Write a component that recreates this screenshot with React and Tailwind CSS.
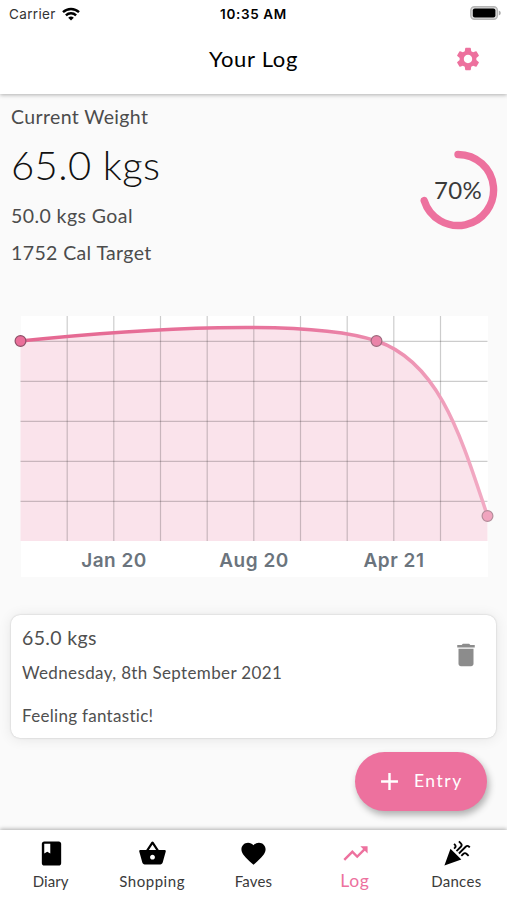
import React from 'react';
import {
  MdAdd,
  MdBook,
  MdCelebration,
  MdDelete,
  MdFavorite,
  MdSettings,
  MdShoppingBasket,
  MdTrendingUp,
} from 'react-icons/md';

const tabs = [
  { label: 'Diary', icon: MdBook, text: 'tracking-[0.1px]' },
  { label: 'Shopping', icon: MdShoppingBasket, text: 'tracking-[0.55px]' },
  { label: 'Faves', icon: MdFavorite, text: 'tracking-[0.2px]' },
  { label: 'Log', icon: MdTrendingUp, active: true },
  { label: 'Dances', icon: MdCelebration, text: 'tracking-[0.3px]' },
];

const columns = [46.7, 93.3, 140, 186.7, 233.3, 280, 326.7, 373.3, 420];
const rows = [25.3, 65.3, 105.3, 145.3, 185.3];

const StatusBar = () => (
  <div className="grid h-7 grid-cols-3 items-center font-['Inter',sans-serif] text-[13.5px] text-black">
    <div className="flex items-center gap-1.5 pl-[9px]">
      <span className="tracking-[0.35px] text-[#333]">Carrier</span>
      <svg width="18" height="14" viewBox="0 0 18 14" fill="none" stroke="#000" strokeWidth="2.4">
        <path d="M1 5.2a11.5 11.5 0 0 1 16 0" />
        <path d="M3.9 8.4a7.3 7.3 0 0 1 10.2 0" />
        <path d="M9 13.6 6.2 10.8a4 4 0 0 1 5.6 0z" fill="#000" stroke="none" />
      </svg>
    </div>
    <span className="text-center font-semibold tracking-[0.65px]">10:35 AM</span>
    <div className="flex justify-end pr-[6px] pb-[2px]">
      <svg width="31" height="14" viewBox="0 0 31 14">
        <rect x="0.8" y="0.8" width="26.6" height="12.4" rx="3.6" fill="#ddd" stroke="#b5b5b5" strokeWidth="1.4" />
        <rect x="2.8" y="2.6" width="22.6" height="8.8" rx="2" fill="#000" />
        <path d="M28.8 4.6q2 .8 2 2.4t-2 2.4z" fill="#aaa" />
      </svg>
    </div>
  </div>
);

const Header = () => (
  <header className="relative z-10 h-[94px] shrink-0 bg-white shadow-[0_1px_4px_rgba(0,0,0,0.3)]">
    <StatusBar />
    <div className="grid h-[62px] grid-cols-3 items-center">
      <h1 className="col-start-2 pb-px text-center text-[22px] tracking-[0.7px] text-black">Your Log</h1>
      <MdSettings className="mr-[25px] size-7 justify-self-end text-[#ed719e]" />
    </div>
  </header>
);

const Progress = () => (
  <div className="grid size-20 place-items-center">
    <svg className="col-start-1 row-start-1" width="80" height="80" viewBox="0 0 80 80">
      <path
        d="M40 4.5A35.5 35.5 0 1 1 6.2 50.6"
        fill="none"
        stroke="#ed719e"
        strokeWidth="7.4"
        strokeLinecap="round"
      />
    </svg>
    <span className="col-start-1 row-start-1 text-2xl tracking-[0.3px] text-[#3a3a3a]">70%</span>
  </div>
);

const WeightChart = () => (
  <div className="mr-[19px] ml-5 h-[261px] border-l border-[#fafafa] bg-white">
    <svg className="-ml-px block overflow-visible" width="467" height="225" viewBox="-0.5 0 467 225">
      <defs>
        <linearGradient id="line" gradientUnits="userSpaceOnUse" x1="0" y1="0" x2="467" y2="0">
          <stop offset="0" stopColor="#e56791" />
          <stop offset="0.6" stopColor="#e8769e" />
          <stop offset="1" stopColor="#f2abc4" />
        </linearGradient>
      </defs>
      <path
        d="M0 25C119 12.5 290 2 356 25C419.5 46 441.5 124 467 200V225H0Z"
        fill="#fae3eb"
      />
      <g stroke="#000" strokeOpacity="0.2" strokeWidth="1.2">
        {columns.map((x) => (
          <line key={x} x1={x} x2={x} y1="0" y2="225" />
        ))}
        {rows.map((y) => (
          <line key={y} x1="0" x2="467" y1={y} y2={y} />
        ))}
      </g>
      <path
        d="M0 25C119 12.5 290 2 356 25C419.5 46 441.5 124 467 200"
        fill="none"
        stroke="url(#line)"
        strokeWidth="3.5"
      />
      <g strokeWidth="1.2">
        <circle cx="0" cy="25" r="5.4" fill="#ea6f9a" stroke="#8f5068" />
        <circle cx="356" cy="25" r="5.4" fill="#ea83a8" stroke="#9d6b7e" />
        <circle cx="467" cy="200" r="5.4" fill="#f0a4be" stroke="#b38c9a" />
      </g>
    </svg>
    <div className="flex justify-center pt-2 pr-px font-['Inter',sans-serif] text-[19px] leading-6 font-semibold tracking-[0.5px] text-[#6b747d]">
      <span className="w-[140px] text-center">Jan 20</span>
      <span className="w-[140px] text-center">Aug 20</span>
      <span className="w-[140px] text-center">Apr 21</span>
    </div>
  </div>
);

const EntryCard = () => (
  <div className="mx-[11px] flex h-[123px] justify-between rounded-[9px] bg-white pt-[9px] pr-[15px] pl-[11px] text-[#505050] shadow-[0_1px_14px_rgba(0,0,0,0.09),0_0_2px_rgba(0,0,0,0.2)]">
    <div>
      <p className="pt-px text-[19.5px] leading-[26px] tracking-[0.35px]">65.0 kgs</p>
      <p className="mt-[10px] text-[17px] leading-6 tracking-[0.37px]">Wednesday, 8th September 2021</p>
      <p className="mt-[19px] text-[17px] leading-6 tracking-[0.3px]">Feeling fantastic!</p>
    </div>
    <MdDelete className="mt-4 size-[30px] text-[#8c8c8c]" />
  </div>
);

const TabBar = () => (
  <nav className="relative z-10 grid h-[70px] shrink-0 grid-cols-5 bg-white shadow-[0_-1px_4px_rgba(0,0,0,0.3)]">
    {tabs.map(({ label, icon: Icon, active, text }) => (
      <div
        key={label}
        className={`flex flex-col items-center pt-[9px] ${active ? 'text-[#ed719e]' : 'text-black'}`}
      >
        <Icon className="ml-px size-[29px]" />
        <span
          className={
            active ? 'text-[17.5px] leading-[25px] tracking-[0.6px]' : `text-[15px] leading-[27px] text-[#3a3a3a] ${text}`
          }
        >
          {label}
        </span>
      </div>
    ))}
  </nav>
);

const App = () => {
  return (
    <div className="flex h-[900px] w-full flex-col overflow-hidden bg-[#fafafa] font-['Lato',sans-serif]">
      <Header />
      <main className="flex-1">
        <section className="flex h-[222px] justify-between pr-[9px] pl-[11px] text-[#4c4c4c]">
          <div>
            <p className="pt-[10px] text-[19.5px] leading-[26px] tracking-[0.36px]">Current Weight</p>
            <p className="mt-[10px] text-[40px] leading-[50px] font-light tracking-[0.4px] text-[#111]">65.0 kgs</p>
            <p className="mt-[13px] text-[19.5px] leading-[26px] tracking-[0.42px]">50.0 kgs Goal</p>
            <p className="mt-[11px] text-[19.5px] leading-[26px] tracking-[0.38px]">1752 Cal Target</p>
          </div>
          <div className="pt-14">
            <Progress />
          </div>
        </section>
        <WeightChart />
        <div className="pt-[38px]">
          <EntryCard />
        </div>
        <div className="flex justify-end pt-3.5 pr-5">
          <button className="flex h-[59px] w-[132px] items-center rounded-full bg-[#ed719e] pl-5 text-white shadow-[2px_4px_7px_rgba(0,0,0,0.3)]">
            <MdAdd className="size-[29px]" />
            <span className="ml-2.5 pb-px text-[17.5px] tracking-[1.5px]">Entry</span>
          </button>
        </div>
      </main>
      <TabBar />
    </div>
  );
};

export default App;
